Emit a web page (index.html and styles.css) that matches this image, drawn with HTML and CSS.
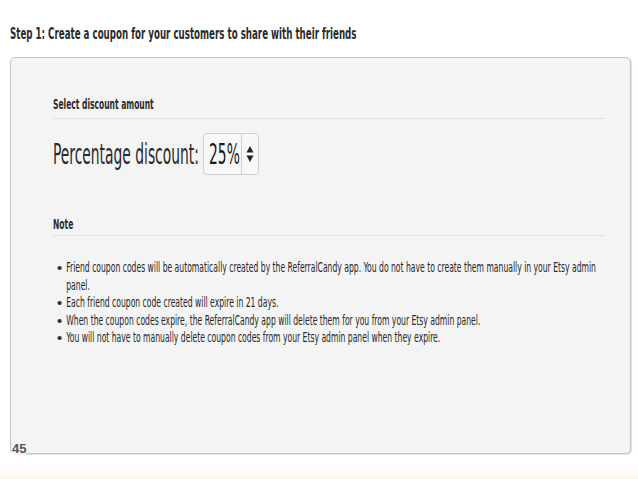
FILE: index.html
```
<!DOCTYPE html>
<html>
<head>
<meta charset="utf-8">
<link rel="stylesheet" href="styles.css">
</head>
<body>
<div class="page">
  <h1 class="title"><span class="narrow title-text">Step 1: Create a coupon for your customers to share with their friends</span></h1>
  <div class="panel">
    <div class="section">
      <h2 class="section-head head-select"><span class="narrow head-text">Select discount amount</span></h2>
      <div class="discount-row">
        <span class="discount-label"><span class="narrow big-text">Percentage discount:</span></span>
        <span class="spinner">
          <span class="spinner-value"><span class="narrow big-text">25%</span></span>
          <span class="spinner-arrows">
            <svg width="8" height="18" viewBox="0 0 8 18"><path d="M4 1 L7.5 7.5 L0.5 7.5 Z" fill="#222"/><path d="M0.5 10.5 L7.5 10.5 L4 17 Z" fill="#222"/></svg>
          </span>
        </span>
      </div>
    </div>
    <div class="section note">
      <h2 class="section-head head-note"><span class="narrow head-text">Note</span></h2>
      <ul class="note-list">
        <li>Friend coupon codes will be automatically created by the ReferralCandy app. You do not have to create them manually in your Etsy admin panel.</li>
        <li>Each friend coupon code created will expire in 21 days.</li>
        <li>When the coupon codes expire, the ReferralCandy app will delete them for you from your Etsy admin panel.</li>
        <li>You will not have to manually delete coupon codes from your Etsy admin panel when they expire.</li>
      </ul>
    </div>
    <span class="slide-num">45</span>
  </div>
  <div class="footer-strip"></div>
</div>
</body>
</html>
```
FILE: styles.css
```
html, body {
  margin: 0;
  padding: 0;
  background: #ffffff;
}
.page {
  width: 638px;
  height: 479px;
  position: relative;
  font-family: "Liberation Sans Narrow", "DejaVu Sans Condensed", "Liberation Sans", sans-serif;
  color: #2a2a2a;
  overflow: hidden;
}
.narrow {
  display: inline-block;
  white-space: nowrap;
  transform-origin: left center;
}
.title {
  margin: 0;
  padding: 26px 0 0 10px;
  font-size: 15px;
  font-weight: bold;
  line-height: 16px;
  color: #2a2a2a;
}
.title-text {
  transform: scaleX(0.644);
}
.panel {
  position: relative;
  margin: 15px 0 0 10px;
  width: 621px;
  height: 397px;
  box-sizing: border-box;
  background: #f4f4f4;
  border: 1px solid #c4c4c4;
  border-radius: 5px;
  box-shadow: 1px 1px 1px rgba(0,0,0,0.12);
  padding: 39px 25px 0 42px;
}
.section-head {
  margin: 0;
  font-size: 14px;
  font-weight: bold;
  line-height: 15px;
  color: #2a2a2a;
  border-bottom: 1px solid #e2e2e2;
}
.head-select {
  padding-bottom: 6px;
}
.head-note {
  padding-bottom: 3px;
}
.head-text {
  transform: scaleX(0.6);
}
.discount-row {
  display: flex;
  align-items: center;
  gap: 5px;
  margin-top: 14px;
}
.discount-label {
  width: 145px;
  font-size: 28px;
}
.big-text {
  transform: scaleX(0.55);
}
.spinner {
  display: flex;
  align-items: stretch;
  height: 42px;
  box-sizing: border-box;
  border: 1px solid #cfcfcf;
  border-radius: 4px;
  background: #f8f8f8;
}
.spinner-value {
  display: flex;
  align-items: center;
  width: 38px;
  box-sizing: border-box;
  padding-left: 5px;
  font-size: 28px;
  color: #1a1a1a;
  border-right: 1px solid #d4d4d4;
}
.spinner-arrows {
  display: flex;
  align-items: center;
  padding: 0 4px;
}
.note {
  margin-top: 42px;
}
.note-list {
  box-sizing: border-box;
  width: 889px;
  margin: 23px 0 0 0;
  padding: 0 0 0 21px;
  font-size: 13.5px;
  line-height: 17.6px;
  color: #262626;
  list-style: none;
  transform: scaleX(0.63);
  transform-origin: left top;
}
.note-list li {
  position: relative;
}
.note-list li::before {
  content: "";
  position: absolute;
  left: -14px;
  top: 7px;
  width: 7px;
  height: 4px;
  border-radius: 50%;
  background: #333;
}
.slide-num {
  position: absolute;
  left: 1px;
  bottom: -2px;
  font-family: "Liberation Sans", Arial, sans-serif;
  font-size: 13px;
  font-weight: bold;
  color: #555;
  background: #f4f4f4;
  line-height: 13px;
}
.footer-strip {
  position: absolute;
  left: 0;
  right: 0;
  bottom: 0;
  height: 14px;
  background: linear-gradient(#ffffff, #fdf7ee);
}
```
